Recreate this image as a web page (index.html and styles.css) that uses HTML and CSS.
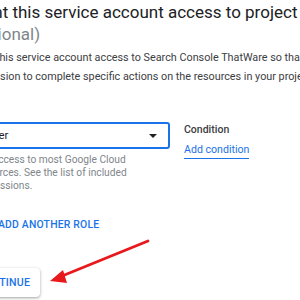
FILE: index.html
```html
<!DOCTYPE html>
<html>
<head>
<meta charset="utf-8">
<link rel="stylesheet" href="styles.css">
</head>
<body>
<div class="page">
  <h1 class="title">Grant this service account access to project <span class="optional">(optional)</span></h1>
  <p class="desc">Grant this service account access to Search Console ThatWare so that it has permission to complete specific actions on the resources in your project.</p>
  <div class="role-row">
    <div class="role-col">
      <div class="select">
        <span class="select-value">Owner</span>
        <span class="caret"></span>
      </div>
      <p class="helper">Full access to most Google Cloud resources. See the list of included permissions.</p>
    </div>
    <div class="cond-col">
      <div class="cond-label">Condition</div>
      <a class="cond-link">Add condition</a>
    </div>
  </div>
  <button class="add-role">
    <svg class="plus" viewBox="0 0 14 14" width="13" height="13"><path d="M7 1v12M1 7h12" stroke="#1a73e8" stroke-width="2"/></svg>
    <span>ADD ANOTHER ROLE</span>
  </button>
  <button class="continue">CONTINUE</button>
</div>
<svg class="arrow" width="300" height="300" viewBox="0 0 300 300">
  <line x1="148" y1="241" x2="62" y2="276" stroke="#e8191b" stroke-width="2.8" stroke-linecap="round"/>
  <polygon points="50,281 63,270 67,283" fill="#e8191b"/>
</svg>
</body>
</html>
```

FILE: styles.css
```css
html, body {
  margin: 0;
  padding: 0;
  width: 300px;
  height: 300px;
  overflow: hidden;
  background: #ffffff;
  font-family: Roboto, "Liberation Sans", sans-serif;
}

.page {
  margin-left: -33px;
  width: 400px;
  display: flex;
  flex-direction: column;
  align-items: flex-start;
}

.title {
  margin: 1px 0 0 0;
  font-size: 17px;
  line-height: 22px;
  font-weight: 400;
  color: #202124;
  width: 345px;
}

.optional {
  color: #80868b;
}

.desc {
  margin: 4px 0 0 0;
  font-size: 10.8px;
  line-height: 18.5px;
  color: #3c4043;
  width: 385px;
}

.role-row {
  margin-top: 36px;
  display: flex;
  gap: 14px;
}

.role-col {
  width: 203px;
}

.select {
  box-sizing: border-box;
  height: 27px;
  border: 2px solid #1a73e8;
  border-radius: 3px;
  display: flex;
  align-items: center;
  justify-content: space-between;
  padding: 0 11px 0 7px;
}

.select-value {
  font-size: 11.3px;
  color: #202124;
}

.caret {
  width: 0;
  height: 0;
  border-left: 4px solid transparent;
  border-right: 4px solid transparent;
  border-top: 4px solid #202124;
}

.helper {
  margin: 4px 0 0 7px;
  width: 162px;
  font-size: 10.2px;
  line-height: 13px;
  color: #80868b;
}

.cond-col {
  display: flex;
  flex-direction: column;
  align-items: flex-start;
  padding-top: 1px;
}

.cond-label {
  font-size: 10.5px;
  line-height: 14px;
  font-weight: 500;
  color: #3c4043;
}

.cond-link {
  margin-top: 6px;
  font-size: 10.6px;
  line-height: 14px;
  color: #1a73e8;
  text-decoration: none;
  border-bottom: 1px solid #1a73e8;
  padding-bottom: 1px;
}

.add-role {
  margin-top: 26px;
  display: flex;
  align-items: center;
  gap: 10px;
  background: none;
  border: none;
  padding: 0 0 0 8px;
  font-family: Roboto, "Liberation Sans", sans-serif;
  font-size: 10.4px;
  font-weight: 500;
  letter-spacing: 0.2px;
  color: #1a73e8;
}

.continue {
  margin-top: 37px;
  box-sizing: border-box;
  height: 29px;
  padding: 0 10px 0 10px;
  background: #ffffff;
  border: none;
  border-radius: 4px;
  box-shadow: 0 1px 2px rgba(60, 64, 67, 0.3), 0 1px 3px 1px rgba(60, 64, 67, 0.15);
  font-family: Roboto, "Liberation Sans", sans-serif;
  font-size: 10.6px;
  font-weight: 500;
  letter-spacing: 0.2px;
  color: #1a73e8;
}

.arrow {
  position: absolute;
  left: 0;
  top: 0;
  pointer-events: none;
}
```
